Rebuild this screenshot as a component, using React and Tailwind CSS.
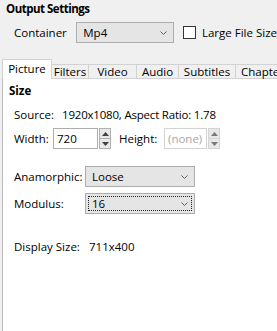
import React from 'react';

const Chevron = () => (
  <svg width="7" height="4" viewBox="0 0 7 4" className="shrink-0">
    <polyline points="0.5,0.5 3.5,3.5 6.5,0.5" fill="none" stroke="#606060" strokeWidth="1" />
  </svg>
);

const Combo = ({ value, width, focused }) => (
  <div className={`relative flex h-[21px] items-center justify-between border border-[#adadad] bg-[#e5e5e5] pl-[6px] pr-[6px] ${width}`}>
    <span className="leading-[14px]">{value}</span>
    <Chevron />
    {focused && <div className="absolute inset-[2px] border border-dotted border-[#202020]" />}
  </div>
);

const Arrow = ({ up, color }) => (
  <svg width="7" height="4" viewBox="0 0 7 4">
    <polygon points={up ? '0,4 3.5,0 7,4' : '0,0 3.5,4 7,0'} fill={color} />
  </svg>
);

const Spinner = ({ disabled }) => {
  const border = disabled ? 'border-[#d5d5d5]' : 'border-[#b0b0b0]';
  const color = disabled ? '#7a7a7a' : '#404040';
  return (
    <div className="ml-[1px] flex h-[21px] w-[12px] flex-col">
      <div className={`flex h-[11px] items-center justify-center border ${border} bg-[#e8e8e8]`}>
        <Arrow up color={color} />
      </div>
      <div className={`-mt-px flex h-[11px] items-center justify-center border ${border} bg-[#e8e8e8]`}>
        <Arrow color={color} />
      </div>
    </div>
  );
};

const tabs = [
  { label: 'Filters', w: 'w-[37px]' },
  { label: 'Video', w: 'w-[48px]' },
  { label: 'Audio', w: 'w-[42px]' },
  { label: 'Subtitles', w: 'w-[57px]' },
];

export default function App() {
  return (
    <div className="flex h-[331px] w-[277px] flex-col overflow-hidden bg-[#f0f0f0] font-['Open_Sans',sans-serif] text-[11.5px] text-black">
      <div className="h-[17px] pl-[6px] pt-[1px] font-bold leading-[16px] tracking-[-0.5px]">Output Settings</div>

      <div className="mt-[5px] flex h-[21px] items-center whitespace-nowrap">
        <span className="ml-[14px] w-[64px] leading-[14px]">Container</span>
        <Combo value="Mp4" width="w-[100px]" />
        <span className="ml-[9px] h-[13px] w-[13px] shrink-0 border border-[#333333] bg-white" />
        <span className="ml-[6px] leading-[14px]">Large File Size</span>
      </div>

      <div className="ml-[2px] mt-[16px] flex h-[20px] items-end whitespace-nowrap border-b border-[#d2d2d2]">
        <div className="relative z-10 -mb-px flex h-[20px] w-[50px] shrink-0 items-center justify-center border-x border-t border-[#d2d2d2] bg-white pb-[1px] leading-[14px]">
          Picture
        </div>
        {tabs.map((t) => (
          <div key={t.label} className={`flex h-[14px] shrink-0 items-center justify-center border-r border-t border-[#d2d2d2] leading-[14px] ${t.w}`}>
            {t.label}
          </div>
        ))}
        <div className="flex h-[14px] w-[60px] shrink-0 items-center border-t border-[#d2d2d2] pl-[5px] leading-[14px]">Chapters</div>
      </div>

      <div className="ml-[2px] flex-1 border-l border-[#bdbdbd] bg-white">
        <div className="mt-[5px] h-[14px] pl-[6px] font-bold leading-[14px]">Size</div>

        <div className="mt-[10px] flex h-[14px] whitespace-nowrap pl-[11px] leading-[14px]">
          <span className="w-[48px]">Source:</span>
          <span className="tracking-[-0.2px]">1920x1080, Aspect Ratio: 1.78</span>
        </div>

        <div className="mt-[6px] flex h-[21px] items-center whitespace-nowrap pl-[11px]">
          <span className="w-[39px] leading-[14px]">Width:</span>
          <div className="flex h-[21px] w-[45px] items-center border border-[#adadad] bg-white pl-[3px] leading-[14px]">720</div>
          <Spinner />
          <span className="ml-[8px] w-[45px] leading-[14px]">Height:</span>
          <div className="flex h-[21px] w-[43px] items-center border border-[#d2d2d2] bg-white pl-[3px] leading-[14px] text-[#a8a8a8]">(none)</div>
          <Spinner disabled />
        </div>

        <div className="mt-[17px] flex h-[21px] items-center whitespace-nowrap pl-[11px]">
          <span className="w-[71px] leading-[14px]">Anamorphic:</span>
          <Combo value="Loose" width="w-[110px]" />
        </div>

        <div className="mt-[6px] flex h-[21px] items-center whitespace-nowrap pl-[11px]">
          <span className="w-[71px] leading-[14px]">Modulus:</span>
          <Combo value="16" width="w-[110px]" focused />
        </div>

        <div className="mt-[26px] flex h-[14px] whitespace-nowrap pl-[11px] leading-[14px]">
          <span className="w-[75px]">Display Size:</span>
          <span>711x400</span>
        </div>
      </div>
    </div>
  );
}
